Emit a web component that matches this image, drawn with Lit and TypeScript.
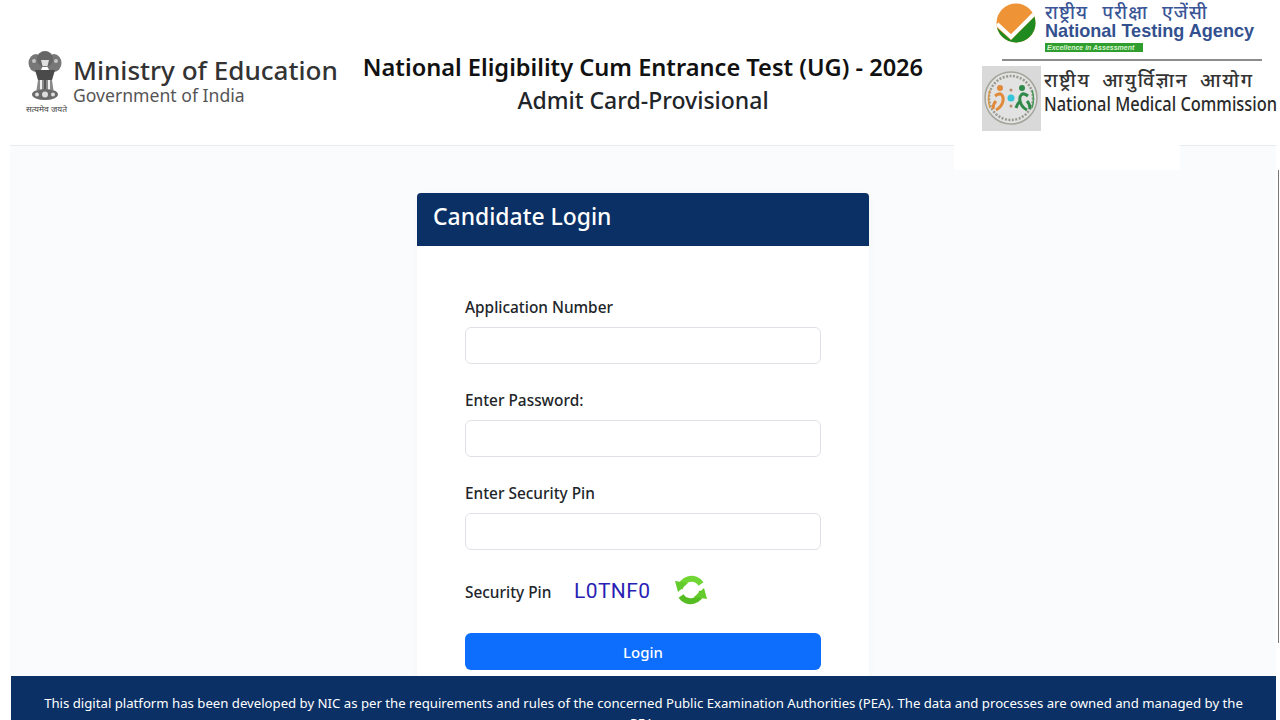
import { LitElement, html, css } from "lit";
import { customElement } from "lit/decorators.js";

@customElement("app-root")
export class AppRoot extends LitElement {
  static styles = css`
    :host { display: block; width: 1280px; height: 720px; overflow: hidden; position: relative; background: #fff; font-family: "Noto Sans", "Open Sans", sans-serif; color: #212529; }
    .page { height: 720px; display: flex; flex-direction: column; padding: 0 4px 0 10px; box-sizing: border-box; }
    .header { height: 146px; flex: none; display: grid; grid-template-columns: 344px 578px 1fr; border-bottom: 1px solid #e9ecef; box-sizing: border-box; }
    .moe { display: flex; align-items: flex-start; padding: 49px 0 0 13px; gap: 2px; }
    .emblem { width: 48px; height: 68px; flex: none; }
    .moe-text { display: flex; flex-direction: column; padding-top: 5px; }
    .moe-name { font-size: 26.1px; line-height: 32px; font-weight: 500; color: #333; white-space: nowrap; }
    .moe-gov { font-size: 17.6px; line-height: 18px; color: #555; white-space: nowrap; }
    .title { text-align: center; padding-top: 50px; }
    .title h1 { margin: 0; font-size: 23.6px; line-height: 34px; font-weight: 600; color: #111; white-space: nowrap; }
    .title h2 { margin: 0; font-size: 23px; line-height: 32px; font-weight: 500; color: #212529; white-space: nowrap; }
    .logos { position: relative; }
    .nta { display: flex; gap: 9px; padding: 3px 0 0 64px; height: 49px; }
    .nta svg { width: 40px; height: 40px; flex: none; }
    .nta-text { display: flex; flex-direction: column; }
    .nta-hi { font-size: 18.5px; line-height: 17px; font-weight: 500; color: #3a5596; white-space: nowrap; letter-spacing: 1.2px; word-spacing: 8px; }
    .nta-en { font-family: "Liberation Sans", sans-serif; font-weight: 700; font-size: 18.1px; line-height: 22px; color: #33508f; white-space: nowrap; }
    .nta-tag { font-family: "Liberation Sans", sans-serif; font-weight: 700; font-style: italic; font-size: 7px; line-height: 9px; color: #d8f5d0; background: #2f9e2f; width: 98px; padding-left: 2px; box-sizing: border-box; margin-top: 1px; white-space: nowrap; overflow: hidden; }
    .rule { height: 2px; width: 260px; background: #8c8c8c; margin: 7px 0 0 70px; }
    .nmc { display: flex; gap: 3px; padding: 5px 0 0 50px; }
    .nmc svg { width: 59px; height: 65px; flex: none; }
    .nmc-text { display: flex; flex-direction: column; padding-top: 3px; }
    .nmc-hi { font-size: 19.5px; line-height: 22px; font-weight: 500; color: #333; white-space: nowrap; letter-spacing: 1.6px; word-spacing: 5px; }
    .nmc-en { font-size: 20px; line-height: 26px; color: #2a2a2a; white-space: nowrap; transform: scaleX(0.82); transform-origin: left; font-weight: 500; }
    .patch { position: absolute; left: 22px; top: 145px; width: 226px; height: 25px; background: #fff; }
    .main { flex: 1; min-height: 0; background: #fafbfc; overflow: hidden; display: flex; justify-content: center; padding-top: 47px; box-sizing: border-box; }
    .card { width: 452px; flex: none; height: 600px; background: #fff; border-radius: 6px 6px 0 0; box-shadow: 0 2px 8px rgba(0, 0, 0, 0.03); }
    .card-head { height: 53px; background: #0a3066; color: #fff; border-radius: 4px 4px 0 0; padding-left: 16px; font-size: 22.9px; font-weight: 500; line-height: 48px; }
    .card-body { padding: 50px 48px 0; }
    .group { margin-bottom: 25px; }
    label { display: block; font-size: 15.4px; font-weight: 500; line-height: 24px; margin-bottom: 7px; color: #212529; }
    input { display: block; width: 100%; height: 37px; box-sizing: border-box; border: 1px solid #dee2e6; border-radius: 6px; background: #fff; outline: none; }
    .pin { display: flex; align-items: center; height: 32px; margin-top: 1px; margin-bottom: 26px; }
    .pin-label { font-size: 15.4px; font-weight: 500; width: 109px; flex: none; padding-top: 3px; }
    .pin-code { font-family: Roboto, sans-serif; font-size: 21px; letter-spacing: 0.4px; color: #2a1fb5; width: 101px; flex: none; }
    .pin svg { width: 32px; height: 32px; margin-top: -2px; }
    .login { display: block; width: 100%; height: 37px; border: 0; border-radius: 6px; background: #0d6efd; color: #fff; font-family: inherit; font-size: 15px; font-weight: 500; }
    .footer { flex: none; height: 44px; background: #0a3066; color: #fff; margin-left: 1px; padding: 17px 32px 0; box-sizing: border-box; text-align: center; font-size: 13.18px; line-height: 20px; overflow: hidden; }
    .scroll { position: absolute; right: 1px; top: 170px; width: 1px; height: 473px; background: #777; }
  `;

  render() {
    return html`
      <div class="page">
        <header class="header">
          <div class="moe">
            <svg class="emblem" viewBox="0 0 48 68" aria-hidden="true">
              <g fill="#777">
                <ellipse cx="13" cy="14" rx="7.5" ry="9" />
                <ellipse cx="31" cy="14" rx="7.5" ry="9" />
                <ellipse cx="22" cy="10" rx="8" ry="8" fill="#666" />
                <circle cx="11" cy="12" r="2" fill="#c4c4c4" />
                <circle cx="33" cy="12" r="2" fill="#c4c4c4" />
                <path d="M18 11h8l-1.500 6h-5z" fill="#e0e0e0" />
                <path d="M12 21h20l-3 10H15z" fill="#4a4a4a" />
                <path d="M15 31h14l1.500 10h-17z" fill="#8a8a8a" />
                <rect x="17" y="31" width="2" height="10" fill="#eee" />
                <rect x="21" y="31" width="2" height="10" fill="#555" />
                <rect x="25" y="31" width="2" height="10" fill="#eee" />
                <ellipse cx="22" cy="45.500" rx="13" ry="5.500" fill="#6a6a6a" />
                <circle cx="22" cy="45.500" r="3" fill="#ddd" />
                <circle cx="14" cy="45.500" r="2" fill="#ddd" />
                <circle cx="30" cy="45.500" r="2" fill="#ddd" />
              </g>
              <text x="23.500" y="63" font-size="8.500" text-anchor="middle" fill="#444">सत्यमेव जयते</text>
            </svg>
            <div class="moe-text">
              <span class="moe-name">Ministry of Education</span>
              <span class="moe-gov">Government of India</span>
            </div>
          </div>
          <div class="title">
            <h1>National Eligibility Cum Entrance Test (UG) - 2026</h1>
            <h2>Admit Card-Provisional</h2>
          </div>
          <div class="logos">
            <div class="nta">
              <svg viewBox="0 0 40 40" aria-hidden="true">
                <defs><clipPath id="disc"><circle cx="20" cy="20" r="19.500" /></clipPath></defs>
                <g clip-path="url(#disc)">
                  <rect width="40" height="40" fill="#ee9336" />
                  <path d="M0 24l15 13L40 12v28H0z" fill="#1f8a1f" />
                  <path d="M1 21l14 13L38 11" fill="none" stroke="#fff" stroke-width="4" />
                </g>
              </svg>
              <div class="nta-text">
                <span class="nta-hi">राष्ट्रीय परीक्षा एजेंसी</span>
                <span class="nta-en">National Testing Agency</span>
                <span class="nta-tag">Excellence in Assessment</span>
              </div>
            </div>
            <div class="rule"></div>
            <div class="nmc">
              <svg viewBox="0 0 59 65" aria-hidden="true">
                <rect width="59" height="65" fill="#d9d9d9" />
                <circle cx="29" cy="32" r="26" fill="#e2e2e2" stroke="#a5a59c" stroke-width="1.500" />
                <circle cx="29" cy="32" r="22" fill="none" stroke="#9a9a90" stroke-width="2.500" stroke-dasharray="2 1.500" />
                <path d="M8 24c-2 6-2 12 0 18" fill="none" stroke="#d99a4a" stroke-width="1.500" />
                <path d="M50 24c2 6 2 12 0 18" fill="none" stroke="#4a9a5a" stroke-width="1.500" />
                <circle cx="18" cy="22" r="3" fill="#e08a3c" />
                <path d="M13 30c6-5 9 0 8 5s-3 7-7 9M11 43c0-3 1-6 3-8" fill="none" stroke="#e08a3c" stroke-width="3" />
                <circle cx="40" cy="22" r="3" fill="#2f8a4a" />
                <path d="M46 30c-6-5-9 0-8 5s3 7 7 9M48 43c0-3-1-6-3-8M34 42c1-3 2-5 4-7" fill="none" stroke="#2f8a4a" stroke-width="3" />
                <circle cx="29" cy="32" r="3.500" fill="#35c5d8" />
                <circle cx="29" cy="24" r="1.500" fill="#b98a6a" />
                <circle cx="29" cy="40" r="1.500" fill="#b98a6a" />
              </svg>
              <div class="nmc-text">
                <span class="nmc-hi">राष्ट्रीय आयुर्विज्ञान आयोग</span>
                <span class="nmc-en">National Medical Commission</span>
              </div>
            </div>
            <div class="patch"></div>
          </div>
        </header>
        <main class="main">
          <section class="card">
            <div class="card-head">Candidate Login</div>
            <div class="card-body">
              <div class="group"><label>Application Number</label><input type="text" /></div>
              <div class="group"><label>Enter Password:</label><input type="password" /></div>
              <div class="group"><label>Enter Security Pin</label><input type="text" /></div>
              <div class="pin">
                <span class="pin-label">Security Pin</span>
                <span class="pin-code">L0TNF0</span>
                <svg viewBox="0 0 32 32" aria-hidden="true">
                  <path d="M5 15A11.500 11.500 0 0 1 26 10" fill="none" stroke="#6fd634" stroke-width="6" />
                  <path d="M0 7l13 2-10 9z" fill="#63cc2c" />
                  <path d="M27 17A11.500 11.500 0 0 1 6 22" fill="none" stroke="#55bd22" stroke-width="6" />
                  <path d="M32 25l-13-2 10-9z" fill="#63cc2c" />
                </svg>
              </div>
              <button class="login">Login</button>
            </div>
          </section>
        </main>
        <footer class="footer">This digital platform has been developed by NIC as per the requirements and rules of the concerned Public Examination Authorities (PEA). The data and processes are owned and managed by the PEA.</footer>
      </div>
      <div class="scroll"></div>
    `;
  }
}
